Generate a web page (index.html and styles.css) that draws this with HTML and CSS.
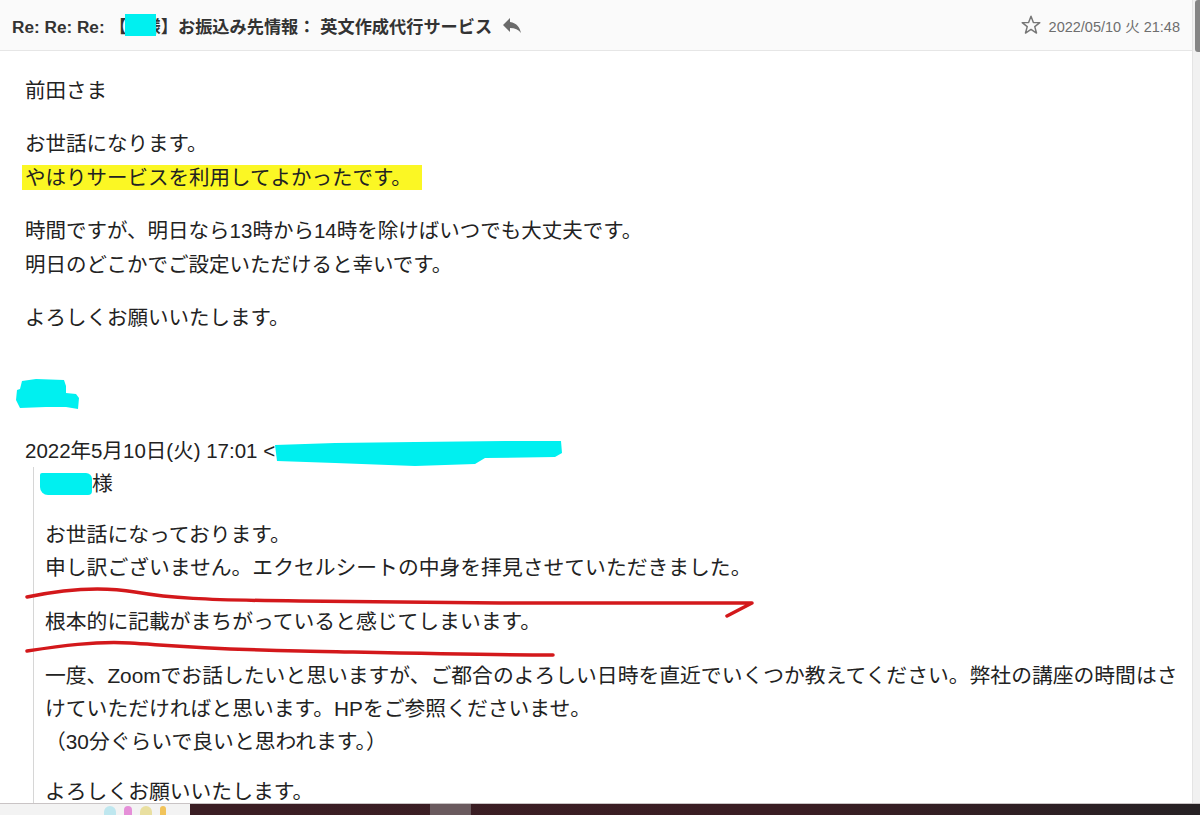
FILE: index.html
```html
<!DOCTYPE html>
<html lang="ja">
<head>
  <meta charset="UTF-8">
  <meta name="viewport" content="width=device-width, initial-scale=1.0">
  <title>お振込み先情報</title>
  <link rel="stylesheet" href="styles.css">
</head>
<body>
  <div class="window">
    <div class="mail">

      <!-- 件名バー -->
      <div class="mail-header">
        <div class="subject">
          Re: Re: Re: 【<span class="mask-title"></span>様】お振込み先情報： 英文作成代行サービス
          <svg class="reply-icon" viewBox="0 0 24 24" width="24" height="24">
            <path d="M10 9V5l-7 7 7 7v-4.1c5 0 8.5 1.6 11 5.1-1-5-4-10-11-11z"/>
          </svg>
        </div>
        <div class="meta">
          <svg class="star-icon" viewBox="0 0 24 24" width="22" height="22">
            <polygon points="12,2.5 14.6,9.2 21.6,9.4 16.1,13.8 18,20.8 12,16.8 6,20.8 7.9,13.8 2.4,9.4 9.4,9.2"/>
          </svg>
          <span class="date">2022/05/10 火 21:48</span>
        </div>
      </div>

      <!-- 本文 -->
      <div class="mail-body">
        <p>前田さま</p>
        <p>お世話になります。<br><span class="marker">やはりサービスを利用してよかったです。</span></p>
        <p>時間ですが、明日なら13時から14時を除けばいつでも大丈夫です。<br>明日のどこかでご設定いただけると幸いです。</p>
        <p>よろしくお願いいたします。</p>

        <div class="signature">
          <svg width="66" height="32" viewBox="0 0 66 32">
            <polygon points="6,3 20,1 48,2 50,8 50,15 60,16 63,20 62,31 50,29 30,29 4,30 0,22 1,12 4,11" fill="#00f0f0"/>
          </svg>
        </div>

        <div class="quote-head">2022年5月10日(火) 17:01 &lt;<svg class="mask-mail" width="288" height="28" viewBox="0 0 288 28">
            <line x1="88" y1="21" x2="140" y2="21" stroke="#2a4fc9" stroke-width="2"/>
            <polygon points="0,6 60,4 140,3 230,2 286,2 287,14 280,18 210,19 200,25 140,27 60,24 2,22" fill="#00f0f0"/>
          </svg></div>

        <blockquote class="quote">
          <p class="greeting"><span class="mask-name"></span>様</p>
          <p>お世話になっております。<br>申し訳ございません。エクセルシートの中身を拝見させていただきました。</p>
          <p>根本的に記載がまちがっていると感じてしまいます。</p>
          <p class="request">一度、Zoomでお話したいと思いますが、ご都合のよろしい日時を直近でいくつか教えてください。弊社の講座の時間はさけていただければと思います。HPをご参照くださいませ。<br>（30分ぐらいで良いと思われます。）</p>
          <p>よろしくお願いいたします。</p>
        </blockquote>

        <!-- 手書きの赤線 -->
        <svg class="pen-marks" width="800" height="620">
          <path d="M27 546 C60 539, 100 535, 135 541 S 200 549, 300 550 L 500 552 L 752 552 L 727 565"/>
          <path d="M27 600 C60 595, 95 590, 130 592 S 200 598, 300 600 S 480 604, 553 604"/>
        </svg>
      </div>
    </div>

    <div class="scrollbar">
      <div class="thumb"></div>
    </div>
  </div>

  <!-- タスクバー -->
  <div class="taskbar">
    <div class="tray-left">
      <span class="dot dot-cyan"></span>
      <span class="dot dot-pink"></span>
      <span class="dot dot-yellow"></span>
      <span class="dot dot-gold"></span>
    </div>
    <div class="tray-main">
      <span class="tray-item"></span>
    </div>
  </div>
</body>
</html>
```

FILE: styles.css
```css
html, body {
  margin: 0;
  padding: 0;
  height: 815px;
  overflow: hidden;
  background-color: #fff;
  font-family: "Liberation Sans", "Noto Sans CJK JP", sans-serif;
  color: #222;
}

.window {
  display: flex;
  height: 803px;
}

.mail {
  flex: 1;
  display: flex;
  flex-direction: column;
  overflow: hidden;
}

.mail-header {
  height: 50px;
  flex-shrink: 0;
  display: flex;
  align-items: center;
  justify-content: space-between;
  padding: 0 12px;
  background-color: #fafafa;
  border-bottom: 1px solid #e6e6e6;
}

.subject {
  display: flex;
  align-items: center;
  font-size: 17.2px;
  font-weight: bold;
  color: #333;
  white-space: nowrap;
}

.mask-title {
  display: inline-block;
  width: 31px;
  height: 22px;
  margin: 0 -12px 0 -2px;
  background-color: #00f0f0;
  position: relative;
  z-index: 1;
}

.reply-icon {
  margin-left: 8px;
  fill: #6b6b6b;
}

.meta {
  display: flex;
  align-items: center;
  gap: 7px;
  font-size: 14.5px;
  color: #6e6e6e;
}

.star-icon {
  fill: none;
  stroke: #777;
  stroke-width: 1.6;
  stroke-linejoin: round;
}

.mail-body {
  position: relative;
  flex: 1;
  padding: 23px 0 0 25px;
  font-size: 20.5px;
  line-height: 34px;
}

.mail-body p {
  margin: 0 0 19px;
}

.marker {
  background-color: #fbf724;
  padding: 1px 10px 1px 3px;
  margin-left: -3px;
}

.signature {
  margin: 43px 0 0 -9px;
  height: 32px;
}

.signature svg {
  display: block;
}

.quote-head {
  margin-top: 28px;
  line-height: 26px;
  white-space: nowrap;
}

.mask-mail {
  vertical-align: -9px;
}

.quote {
  margin: 0 0 0 8px;
  padding-left: 11px;
  border-left: 1px solid #d6d6d6;
  font-size: 20.8px;
  line-height: 33px;
}

.quote p {
  margin: 0 0 21px;
}

.quote .greeting {
  margin-bottom: 18px;
}

.quote .request {
  margin-bottom: 17px;
}

.mask-name {
  display: inline-block;
  width: 52px;
  height: 22px;
  margin-left: -5px;
  vertical-align: -4px;
  background-color: #00f0f0;
  border-radius: 2px 6px 4px 8px;
}

.pen-marks {
  position: absolute;
  top: 0;
  left: 0;
  pointer-events: none;
  fill: none;
  stroke: #d3181b;
  stroke-width: 3.5;
  stroke-linecap: round;
  stroke-linejoin: round;
}

.scrollbar {
  width: 7px;
  background-color: #f1f1f1;
  border-left: 1px solid #e4e4e4;
}

.thumb {
  width: 5px;
  height: 52px;
  margin-left: auto;
  background-color: #858585;
  border-radius: 3px 0 0 3px;
}

.taskbar {
  display: flex;
  height: 12px;
  border-top: 1px solid #c9c4c5;
  box-sizing: border-box;
}

.tray-left {
  width: 190px;
  display: flex;
  align-items: flex-start;
  gap: 8px;
  padding-left: 104px;
  box-sizing: border-box;
  background-color: #f3f3f3;
}

.dot {
  width: 12px;
  height: 9px;
  border-radius: 6px 6px 0 0;
  margin-top: 2px;
}

.dot-cyan { background-color: #bfe7ef; }
.dot-pink { background-color: #e58fd8; width: 8px; }
.dot-yellow { background-color: #e9dfa0; }
.dot-gold { background-color: #f1c35a; width: 6px; }

.tray-main {
  flex: 1;
  background: linear-gradient(to right, #3b1e24, #3a1d23 60%, #262124);
}

.tray-item {
  display: block;
  width: 41px;
  height: 100%;
  margin-left: 240px;
  background-color: #6a5a5e;
}
```
